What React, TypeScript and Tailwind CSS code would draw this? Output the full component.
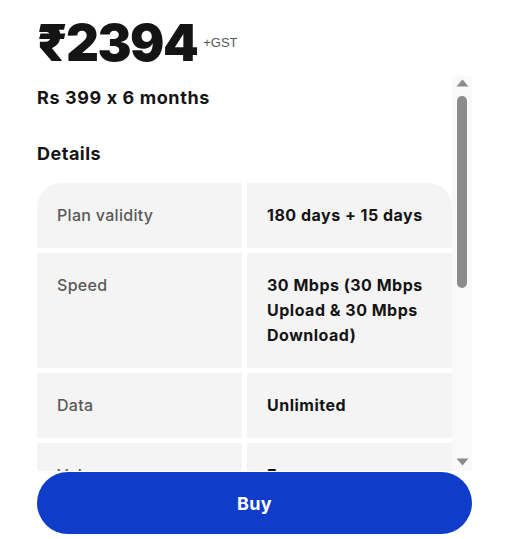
const rows: { label: string; value: string }[] = [
  { label: 'Plan validity', value: '180 days + 15 days' },
  { label: 'Speed', value: '30 Mbps (30 Mbps Upload & 30 Mbps Download)' },
  { label: 'Data', value: 'Unlimited' },
  { label: 'Voice', value: 'Free' },
  { label: 'OTT apps', value: 'JioCinema Premium, Disney+ Hotstar' },
];

function Arrow({ down }: { down?: boolean }) {
  return (
    <svg width="13" height="8" viewBox="0 0 13 8" className="shrink-0">
      <path d={down ? 'M0.5 0.5 H12.5 L6.5 7.5 Z' : 'M6.5 0.5 L12.5 7.5 H0.5 Z'} fill="#8a8a8a" />
    </svg>
  );
}

export default function App() {
  return (
    <div className="h-[539px] w-[509px] overflow-hidden bg-white pl-[37px] pr-[37px] font-['Inter',sans-serif] text-[#141414] [font-feature-settings:'calt'_0]">
      <div className="flex items-start pt-[15px]">
        <span className="text-[51px] font-black leading-[56px] tracking-[-1.5px]">₹2394</span>
        <span className="ml-[6px] mt-[18px] font-['Liberation_Sans',sans-serif] text-[13px] text-[#595959]">+GST</span>
      </div>

      <div className="mt-[5px] flex h-[395px]">
        <div className="min-w-0 flex-1 overflow-hidden">
          <p className="mt-[10px] text-[18px] font-bold leading-[24px] tracking-[0.6px]">Rs 399 x 6 months</p>
          <p className="mt-[32px] text-[18px] font-bold leading-[24px] tracking-[0.5px]">Details</p>

          <div className="mt-[17px] flex flex-col gap-[5px]">
            {rows.map((row, i) => (
              <div key={row.label} className="grid grid-cols-2 gap-[5px]">
                <div
                  className={`bg-[#f4f4f4] px-5 py-5 text-[16px] font-medium leading-[25px] tracking-[0.3px] text-[#595959] ${
                    i === 0 ? 'rounded-tl-[24px]' : ''
                  }`}
                >
                  {row.label}
                </div>
                <div
                  className={`bg-[#f4f4f4] px-5 py-5 text-[16px] font-bold leading-[25px] tracking-[0.5px] text-[#141414] ${
                    i === 0 ? 'rounded-tr-[24px]' : ''
                  }`}
                >
                  {row.value}
                </div>
              </div>
            ))}
          </div>
        </div>

        <div className="flex w-[20px] shrink-0 flex-col items-center bg-[#f9f9f9] pt-[3px] pb-[5px]">
          <Arrow />
          <div className="mt-[9px] h-[192px] w-[10px] rounded-full bg-[#8c8c8c]" />
          <div className="flex-1" />
          <Arrow down />
        </div>
      </div>

      <button className="mt-[1px] flex h-[62px] w-full items-center justify-center rounded-full bg-[#0f3cc9] text-[18px] font-bold tracking-[0.3px] text-white">
        Buy
      </button>
    </div>
  );
}
